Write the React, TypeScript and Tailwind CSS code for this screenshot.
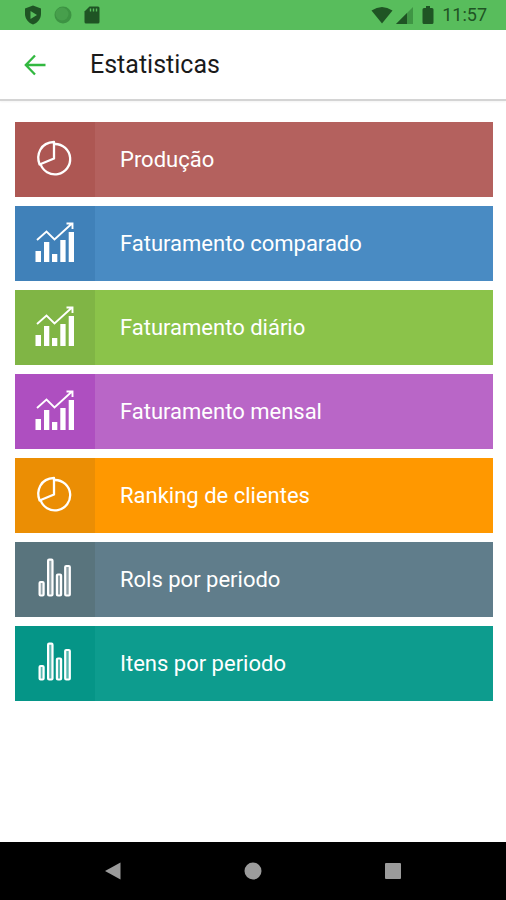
import type { ReactNode } from 'react';

interface StatItem {
  id: string;
  label: string;
  icon: ReactNode;
  rowClass: string;
  tileClass: string;
}

function PieIcon() {
  return (
    <svg width="40" height="40" viewBox="0 0 40 40" fill="none" stroke="currentColor" strokeWidth="2.3" strokeLinejoin="round" aria-hidden="true">
      <path d="M20 6A15.200 15.200 0 1 1 5.400 25.500" />
      <path d="M19 4V20.500L4.600 26.500C.8 16.500 5.500 4.500 19 4Z" />
    </svg>
  );
}

function TrendIcon() {
  return (
    <svg width="40" height="40" viewBox="0 0 40 40" fill="none" aria-hidden="true">
      <g fill="currentColor">
        <rect x="0.500" y="29" width="5.500" height="11" />
        <rect x="9" y="20" width="5.300" height="20" />
        <rect x="17" y="32" width="5.300" height="8" />
        <rect x="25.300" y="18" width="5.300" height="22" />
        <rect x="33.700" y="10" width="5.300" height="30" />
      </g>
      <path d="M2 18L11.500 9.500L19.500 17.500L37 1.500M31.500 1.500H37.500V7" stroke="currentColor" strokeWidth="1.900" />
    </svg>
  );
}

function BarsIcon() {
  return (
    <svg width="40" height="40" viewBox="0 0 40 40" fill="#ffffff55" stroke="currentColor" strokeWidth="2.200" aria-hidden="true">
      <rect x="4.600" y="24" width="4" height="13.500" rx="1" />
      <rect x="13.100" y="1.700" width="4.400" height="35.800" rx="1" />
      <rect x="21.900" y="16.500" width="4.200" height="21" rx="1" />
      <rect x="30.200" y="8" width="4.600" height="29.500" rx="1" />
    </svg>
  );
}

const items: StatItem[] = [
  { id: 'producao', label: 'Produção', icon: <PieIcon />, rowClass: 'bg-[#b4615e]', tileClass: 'bg-[#ad5753]' },
  { id: 'comparado', label: 'Faturamento comparado', icon: <TrendIcon />, rowClass: 'bg-[#498bc3]', tileClass: 'bg-[#4081b9]' },
  { id: 'diario', label: 'Faturamento diário', icon: <TrendIcon />, rowClass: 'bg-[#8bc34a]', tileClass: 'bg-[#80b545]' },
  { id: 'mensal', label: 'Faturamento mensal', icon: <TrendIcon />, rowClass: 'bg-[#b966c7]', tileClass: 'bg-[#ae4fc0]' },
  { id: 'ranking', label: 'Ranking de clientes', icon: <PieIcon />, rowClass: 'bg-[#ff9800]', tileClass: 'bg-[#eb8e04]' },
  { id: 'rols', label: 'Rols por periodo', icon: <BarsIcon />, rowClass: 'bg-[#607d8b]', tileClass: 'bg-[#59747d]' },
  { id: 'itens', label: 'Itens por periodo', icon: <BarsIcon />, rowClass: 'bg-[#0d9c8e]', tileClass: 'bg-[#059587]' },
];

function StatusBar() {
  return (
    <div className="flex h-[30px] items-center justify-between bg-[#58bd5c] pr-[19px] pl-6 text-[#1f5424]">
      <div className="flex items-center gap-3">
        <svg width="18" height="20" viewBox="0 0 18 20" aria-hidden="true">
          <path d="M9 .5L17 3.5V9C17 14 13.5 18 9 19.5C4.500 18 1 14 1 9V3.500Z" fill="currentColor" />
          <path d="M6.500 6L13 10L6.500 14Z" fill="#58bd5c" />
        </svg>
        <svg width="18" height="18" viewBox="0 0 18 18" aria-hidden="true">
          <circle cx="9" cy="9" r="8.500" fill="#3d9343" />
          <circle cx="8" cy="8" r="6.500" fill="#479f4c" />
        </svg>
        <svg width="16" height="18" viewBox="0 0 16 18" aria-hidden="true">
          <path d="M5.500 .5H14Q15.500 .5 15.500 2V16Q15.500 17.500 14 17.500H2Q.5 17.500 .5 16V5.500Z" fill="currentColor" />
          <path d="M6.500 2.500V5.500M9.500 2.500V5.500M12.500 2.500V5.500" stroke="#58bd5c" strokeWidth="1.400" />
        </svg>
      </div>
      <div className="flex items-center">
        <svg width="22" height="18" viewBox="0 0 22 18" aria-hidden="true">
          <path d="M.5 4.500Q11-2.500 21.500 4.500L11 17.500Z" fill="currentColor" />
        </svg>
        <svg className="ml-[3px]" width="17" height="17" viewBox="0 0 17 17" aria-hidden="true">
          <path d="M17 0V17H0Z" fill="#3f9544" />
          <path d="M11 6V17H0Z" fill="currentColor" />
        </svg>
        <svg className="ml-[9px]" width="12" height="18" viewBox="0 0 12 18" aria-hidden="true">
          <path d="M4 0H8V2H10Q11.500 2 11.500 3.500V16.500Q11.500 18 10 18H2Q.5 18 .5 16.500V3.500Q.5 2 2 2H4Z" fill="currentColor" />
        </svg>
        <span className="ml-2 text-lg leading-5">11:57</span>
      </div>
    </div>
  );
}

function NavigationBar() {
  return (
    <nav className="flex h-[58px] items-center justify-around bg-black px-[43px] text-[#9b9b9b]">
      <button type="button" aria-label="Voltar">
        <svg width="18" height="18" viewBox="0 0 18 18" fill="currentColor" aria-hidden="true">
          <path d="M1 9L16.500 .5V17.500Z" />
        </svg>
      </button>
      <button type="button" aria-label="Início">
        <svg width="18" height="18" viewBox="0 0 18 18" fill="currentColor" aria-hidden="true">
          <circle cx="9" cy="9" r="8.500" />
        </svg>
      </button>
      <button type="button" aria-label="Recentes">
        <svg width="18" height="18" viewBox="0 0 18 18" fill="currentColor" aria-hidden="true">
          <rect x="1" y="1" width="16" height="16" rx="1" />
        </svg>
      </button>
    </nav>
  );
}

export default function App() {
  return (
    <div className="flex min-h-screen flex-col bg-white font-[Roboto,sans-serif]">
      <StatusBar />

      <header className="flex h-[71px] items-center gap-11 border-b-2 border-[#d4d4d4] px-6 shadow-xs">
        <button type="button" aria-label="Voltar" className="text-[#32b840]">
          <svg width="22" height="22" viewBox="0 0 22 22" fill="none" stroke="currentColor" strokeWidth="2.300" aria-hidden="true">
            <path d="M21.500 11H2M11 1.500L1.800 11L11 20.500" />
          </svg>
        </button>
        <h1 className="text-[25px] leading-8 font-normal text-[#1a1a1a]">Estatisticas</h1>
      </header>

      <main className="flex flex-1 flex-col gap-[9px] pt-[21px] pr-[13px] pb-6 pl-[15px]">
        {items.map((item) => (
          <button
            key={item.id}
            type="button"
            className={`flex h-[75px] items-stretch text-left text-white ${item.rowClass}`}
          >
            <span className={`flex w-20 items-center justify-center pb-1 ${item.tileClass}`}>
              {item.icon}
            </span>
            <span className="self-center pl-[25px] text-[22px] leading-7">{item.label}</span>
          </button>
        ))}
      </main>

      <NavigationBar />
    </div>
  );
}
